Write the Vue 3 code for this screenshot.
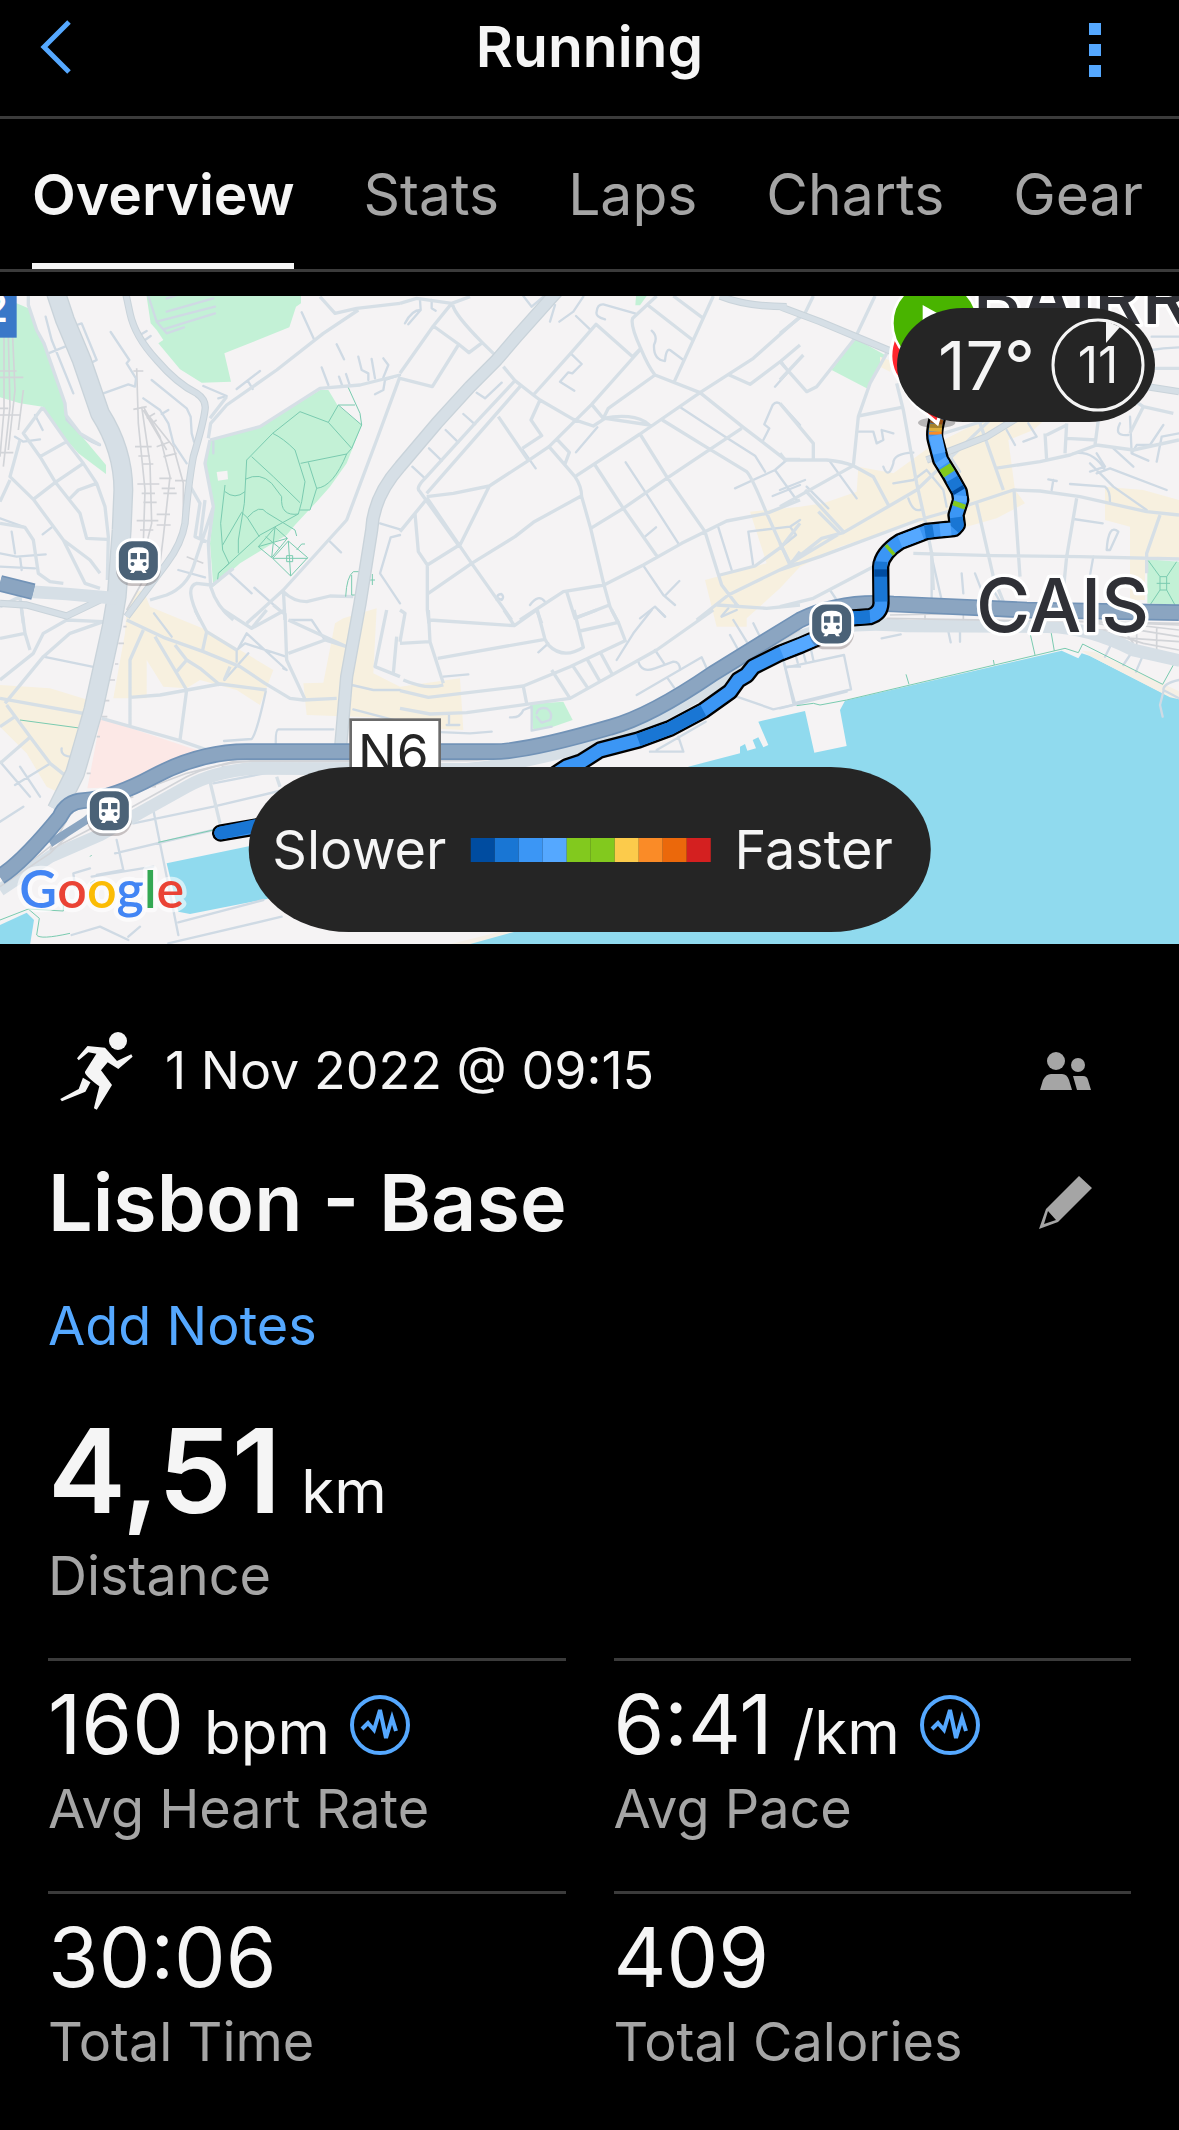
<template>
  <div class="activity-page">
    <header class="top-bar">
      <button class="icon-btn back-btn" type="button" aria-label="Back">
        <svg width="32" height="54" viewBox="0 0 32 54">
          <path d="M29 2 4 27l25 25" fill="none" stroke="currentColor" stroke-width="5" />
        </svg>
      </button>
      <h1 class="page-title">Running</h1>
      <button class="icon-btn menu-btn" type="button" aria-label="More options">
        <svg width="12" height="54" viewBox="0 0 12 54" fill="currentColor">
          <rect width="12" height="12" />
          <rect y="21" width="12" height="12" />
          <rect y="42" width="12" height="12" />
        </svg>
      </button>
    </header>

    <nav class="tabs">
      <button
        v-for="tab in tabs"
        :key="tab"
        type="button"
        class="tab"
        :class="{ active: tab === activeTab }"
        @click="activeTab = tab"
      >
        {{ tab }}
      </button>
    </nav>

    <section class="map">
      <svg class="map-canvas" viewBox="0 18 3537 1944" role="img" aria-label="Route map">
        <path v-for="(area, i) in areas" :key="'area' + i" :class="area.kind" :d="area.d" />

        <template v-for="layer in layers" :key="layer">
          <g v-for="(tile, i) in tiles" :key="layer + i" :transform="`translate(${tile.x} ${tile.y})`">
            <path v-if="tile[layer]" :class="layer" :d="tile[layer]" />
          </g>
        </template>

        <path v-for="(road, i) in mainRoads" :key="'road' + i" :class="road.kind" :d="road.d" />

        <!-- road shields -->
        <rect class="shield-blue" x="-60" y="0" width="110" height="143" />
        <text class="shield-blue-text" x="24" y="96">2</text>
        <rect class="shield-white" x="1052" y="1289" width="267" height="180" />
        <text class="shield-white-text" x="1074" y="1444">N6</text>

        <!-- recorded route -->
        <path class="route-casing" :d="routeLine" />
        <path class="route-base" :d="routeLine" />
        <path v-for="(part, i) in routeParts" :key="'part' + i" class="route-part" :stroke="part.color" :d="part.d" />
        <path class="route-end" d="M662 1629 780 1604" />

        <!-- finish and start pins -->
        <ellipse class="pin-shadow" cx="2810" cy="398" rx="56" ry="16" />
        <path class="pin-finish" d="M2684 140Q2660 200 2684 250L2740 340 2812 400 2872 200z" />
        <circle class="pin-start" cx="2805" cy="100" r="128" />
        <path class="pin-play" d="M2768 45l90 50-90 50z" />

        <g v-for="(station, i) in stations" :key="'station' + i" :transform="`translate(${station.x} ${station.y})`">
          <rect class="station-shadow" x="-67" y="-58" width="134" height="134" rx="48" />
          <rect class="station-box" x="-63" y="-63" width="126" height="126" rx="44" />
          <path
            class="station-train"
            fill-rule="evenodd"
            d="M-31-23Q-31-40 0-40T31-23V16Q31 28 20 29L25 37H14L9 30H-9L-14 37H-25L-20 29Q-31 28-31 16ZM-23-23V-4H-4V-23ZM5-23V-4H24V-23ZM-18 4a6 6 0 1 0 1 0ZM18 4a6 6 0 1 0 1 0Z"
          />
        </g>

        <text class="place" x="2918" y="103">BAIRR</text>
        <text class="place" x="2928" y="1025">CAIS</text>

        <text class="google" x="58" y="1855">
          <tspan class="g-blue">G</tspan><tspan class="g-red">o</tspan><tspan class="g-yellow">o</tspan><tspan class="g-blue">g</tspan><tspan class="g-green">l</tspan><tspan class="g-red">e</tspan>
        </text>
      </svg>

      <div class="weather">
        <span class="temperature">17°</span>
        <span class="wind">
          <svg class="wind-ring" viewBox="0 0 94 94">
            <circle cx="47" cy="47" r="45" />
            <path d="M55 3 69 9 55 25z" />
          </svg>
          <span class="wind-speed">11</span>
        </span>
      </div>

      <div class="legend">
        <span>Slower</span>
        <div class="legend-bar">
          <span v-for="(color, i) in paceColors" :key="i" :style="{ backgroundColor: color }"></span>
        </div>
        <span>Faster</span>
      </div>
    </section>

    <main class="details">
      <div class="date-row">
        <svg class="runner" width="73" height="78" viewBox="0 0 73 78" fill="currentColor">
          <ellipse cx="58" cy="9" rx="9" ry="9" />
          <path d="M27.5 14 45 15.700 57 29 71.300 22.300 72.600 24.700 58.300 37 47.700 30.300 41 38.300 52 53 36.800 77.700 33.900 76.300 39.300 54.300Q24 43 25 39.700L36.400 21.700 28.400 20.300 18.700 28.300 17 26.300z" />
          <path d="M22.900 45.700 30.500 50.300 25.400 59.700 1.900 69.300.2 67 18.700 57z" />
        </svg>
        <time class="date" datetime="2022-11-01T09:15">1 Nov 2022 @ 09:15</time>
        <button class="icon-btn" type="button" aria-label="Privacy">
          <svg width="52" height="38" viewBox="0 0 52 38" fill="currentColor">
            <circle cx="16" cy="9" r="9" />
            <circle cx="38" cy="13" r="7" />
            <path d="M0 38 3 28Q6 22 11 22H22Q27 22 29 28L32 38zM33 24H43Q47 24 48 28L51 38H37z" />
          </svg>
        </button>
      </div>

      <div class="title-row">
        <h2 class="activity-title">Lisbon - Base</h2>
        <button class="icon-btn" type="button" aria-label="Edit title">
          <svg width="53" height="53" viewBox="0 0 53 53" fill="currentColor" fill-rule="evenodd">
            <path d="M40 0 53 12 19 46 0 53 7 33zM9 35 5 48 17 44z" />
          </svg>
        </button>
      </div>

      <a href="#" class="notes-link">Add Notes</a>

      <dl class="stats">
        <div v-for="stat in stats" :key="stat.label" class="stat" :class="{ primary: stat.primary }">
          <dt class="stat-label">{{ stat.label }}</dt>
          <dd class="stat-value">
            <span>{{ stat.value }}</span>
            <span v-if="stat.unit" class="stat-unit">{{ stat.unit }}</span>
            <button v-if="stat.chart" class="icon-btn chart-btn" type="button" :aria-label="stat.label + ' chart'">
              <svg width="60" height="60" viewBox="0 0 60 60" fill="none" stroke="currentColor">
                <circle cx="30" cy="30" r="28" stroke-width="4" />
                <path d="M12 34 18 28 24 35 30 15 36 43 42 23 46 36" stroke-width="4" />
              </svg>
            </button>
          </dd>
        </div>
      </dl>
    </main>
  </div>
</template>

<script setup>
import { ref } from 'vue'

const tabs = ['Overview', 'Stats', 'Laps', 'Charts', 'Gear']
const activeTab = ref('Overview')

const stats = [
  { label: 'Distance', value: '4,51', unit: 'km', primary: true },
  { label: 'Avg Heart Rate', value: '160', unit: 'bpm', chart: true },
  { label: 'Avg Pace', value: '6:41', unit: '/km', chart: true },
  { label: 'Total Time', value: '30:06' },
  { label: 'Total Calories', value: '409' }
]

const paceColors = [
  '#004ca0', '#1976d4', '#3b96f5', '#55a8ff', '#82c91e',
  '#82c91e', '#fccb4b', '#fa8b27', '#eb680b', '#d42020'
]

const stations = [
  { x: 415, y: 812 },
  { x: 328, y: 1562 },
  { x: 2495, y: 1002 }
]

// Filled areas, in map coordinates
const areas = [
  { kind: 'park', d: 'M0 40H50L85 55 105 115 130 155 195 345 200 385 318 525V552L235 490 165 410 128 350 60 340 0 322z' },
  { kind: 'park', d: 'M437 0H903V40L888 50 868 112 673 190 693 275 605 278 540 238 475 160 490 150 470 120 452 100z' },
  { kind: 'park', d: 'M630 450 780 410 960 300H985L1012 345 1085 405 1040 520 990 590 950 635 885 705 860 735 720 820 640 890 630 760 642 650 615 520z' },
  { kind: 'land', d: 'M650 546 682 542 684 568 654 572z' },
  { kind: 'park', d: 'M1908 18H1940L1920 46H1906z' },
  { kind: 'park', d: 'M2565 145 2655 195 2600 295 2495 240z' },
  { kind: 'park', d: 'M1590 1242 1690 1235 1718 1290 1655 1312 1600 1320z' },
  { kind: 'park', d: 'M3442 808 3537 815V945L3442 940z' },
  { kind: 'sand', d: 'M380 960 410 905 430 900 450 950 620 1020 820 1140 780 1245 710 1200 600 1170 560 1195 490 1190 440 1110V1225H340L375 1030z' },
  { kind: 'sand', d: 'M0 1185 150 1195 265 1230 225 1400 200 1480 180 1510 140 1490 80 1390 0 1310z' },
  { kind: 'sand', d: 'M1030 985 1130 955 1120 1150 1200 1190 1380 1165 1390 1320 1200 1310V1285L920 1275 910 1180 970 1178 1005 1000z' },
  { kind: 'sand', d: 'M2250 665 2400 650 2470 640 2570 605 2575 530 2680 550 2790 470 2930 400 3060 370 3140 385 3100 420 3025 450 3045 600 3075 640 2990 685 2900 710 2820 690 2740 700 2520 770 2400 830 2340 895 2240 985V1010H2150L2115 870 2300 820z' },
  { kind: 'sand', d: 'M3315 590 3430 600 3537 630V810L3435 805V930H3390V710L3315 690z' },
  { kind: 'sand', d: 'M2640 200 2680 215 2670 245 2640 230z' },
  { kind: 'hospital', d: 'M302 1285 615 1388 600 1400 480 1435 345 1492 262 1495z' },
  { kind: 'water', d: 'M500 1720 860 1645V1815L570 1872 535 1865z' },
  { kind: 'water', d: 'M0 1905 80 1868 102 1890 90 1965H0z' },
  { kind: 'shore', d: 'M1340 1965 1500 1925H1560L1420 1965z' },
  { kind: 'water', d: 'M1400 1965 1545 1925 1900 1700 2065 1430 2220 1390V1370L2235 1362 2242 1382 2268 1375 2258 1350 2275 1342 2290 1372 2305 1365 2275 1295 2415 1263 2443 1388 2540 1368 2520 1260 2535 1232 3185 1082 3235 1105 3245 1090 3270 1098 3510 1220 3540 1225V1965z' },
  { kind: 'shore', d: 'M3245 1082 3285 1086 3540 1205V1228L3510 1222 3270 1098z' }
]

// Drawing order of the line layers
const layers = ['rail', 'lane', 'street', 'trail']

// Minor lines, each tile with its own origin
const tiles = [
  {
    x: 0,
    y: 0,
    rail: 'M12 140V360L0 500M25 140 30 350 10 530M38 140 45 300 25 480M70 300 55 420M0 243H50M0 262H70M0 375H60M0 355H25M0 488H40M410 235 415 400 435 600 430 760M425 350 450 520 455 700 440 760M430 350 480 440 510 560 490 740 480 820M440 370 520 470 550 580V700M430 360 500 480M400 243H430M400 358 440 350M405 470H455M415 498H450M425 522H460M412 582H478M425 610H465M430 637H470M410 692H475M420 720H460M440 385 465 370M455 400 470 390M470 470 510 455M490 500 530 490M478 565H515M485 595H525M490 610H530M525 572H560M470 673H510M470 705H512M430 870 380 960M450 870 400 950M560 800 610 820',
    lane: 'M137 80 155 150 220 310M145 190 195 170M230 105 245 100 290 210 280 215M332 126 388 210 380 220 408 265 405 290 385 283 310 310M197 355 200 390 250 440Q280 460 300 465M455 270 560 355 572 380 575 430 582 455M430 325 480 360 505 400 520 460 560 520M485 372 505 360M420 135 440 123M435 150 452 138M710 297 780 243M743 272 758 297M610 288 680 318 655 325M905 67 943 150M965 232 985 285M1010 163 1032 208M1017 260 1026 285M1038 252 1048 282M1075 200 1085 240 1105 250V270M1115 207 1125 265M1150 205 1165 225 1150 262M1125 313 1150 300 1155 270 1200 255M0 685 75 712M35 725 45 790M0 790 50 800 137 793M0 830 105 835M60 800 65 840M128 733 155 712M640 455V490M535 840 615 862M690 850 755 910M763 893 850 970M985 750 1023 787M1140 700 1200 718M1200 735 1172 742 1140 850 1200 940M105 375 128 420M45 440 70 455 120 448M445 18 470 95 500 130 552 112M500 25 540 12M500 65 640 25M470 95 645 50M490 118 645 70',
    street: 'M85 0V45L110 120 132 160 195 340 198 375 240 430 300 465M128 352 70 430 120 500 165 575 240 670 260 745 320 748M128 352 200 455 250 520 290 580 315 650 325 740 322 870M120 500 200 455M100 628 165 578 250 520M207 628 235 600 290 580M60 450 30 560 100 628 190 750 255 880 300 895M190 750 270 810 300 850M30 570 0 635M0 700 75 712 100 750 115 850 150 875 190 880M960 20 1005 70 1070 55 1200 40M1075 60 970 130 830 240 680 345 632 400 625 445M680 320 630 385M630 450 780 410 960 295 1080 285 1200 255M630 450 615 520 640 650 625 760 632 890Q650 950 700 990M632 890 700 835M1200 260 1130 450 1040 690 850 900 740 1000M600 990Q550 890 590 880L632 885M850 905Q880 935 920 935L990 918 1060 920M850 900 855 990M850 970 820 945M560 570 600 640 585 740 620 755M615 630 600 750M0 950 80 910 60 920 70 1000M450 930 500 915Q560 890 580 830L640 650',
    trail: 'M675 585 662 700 668 780 687 820 655 850 653 868M655 850 780 735 895 672 905 635 915 575 885 480Q850 445 818 430L900 365 985 397 1055 475M818 430 740 510 733 640 715 750V790M755 500 820 560 900 638M735 568Q780 545 815 580L845 620Q840 680 895 672M675 605Q705 630 735 605M725 667 742 683 778 740M742 683Q780 640 800 668L885 720 890 738M668 765 725 667M902 520 1040 492 1055 475 1085 405 1080 370 1045 293M985 397 1015 345H1065M1015 345 1085 405M925 517 950 595 930 660H900M950 595Q1000 590 1040 492M825 712 862 745 815 803 775 770 825 712 815 803M862 745 775 770M797 740 840 775M865 753 923 803 872 858 818 805 865 753 872 858M818 805H923M860 797H878V815H860zM890 780 905 762H915M1037 920Q1040 860 1060 845H1078M1055 855V915H1070M1100 870H1125M1117 852V885'
  },
  {
    x: 1200,
    y: 0,
    lane: 'M60 30 62 60Q35 60 15 100M62 60 25 103M95 30V55L107 62M370 18 395 50 430 20M465 45 450 95M478 95 520 65 550 20M528 78 570 118M615 88Q585 80 590 65 592 42 610 43L705 70M512 190 545 222 517 250 505 247 480 275 523 302M305 278 255 325 230 308M190 372 225 403M137 420 175 457M87 475 125 512M37 530 75 565M368 480 407 535M528 487 592 412M755 122Q775 140 762 165 760 210 795 213 798 175 810 180L850 210M843 353 980 443 1065 497 1095 545M677 517 735 605 835 760M735 740 768 712M955 712 995 840M1060 830 1045 725 1170 710 1200 690M1170 710 1188 735 1145 770M1143 213 1165 245 1125 290M1090 450 1108 415 1093 403 1118 345Q1130 330 1145 345L1200 405M1005 595 1125 540 1160 510M1125 540 1190 630M1118 618 1200 585M730 827 790 915 825 945M797 915 838 873M390 945Q415 910 435 935M720 985 765 950 795 980M965 978 985 955M290 930Q290 912 304 912 314 920 305 930L295 925',
    street: 'M0 40 50 25 155 40 210 20M155 40 100 108 0 250M100 108 175 162 207 188 247 158M175 165 97 290 0 265M158 45Q165 75 247 158L290 200M310 230 345 272 400 315 420 330 520 388 580 408 615 385 750 405 750 402M345 272 225 400 75 565Q45 595 60 605L175 765M360 290 80 610M80 620 160 610 268 588 385 512 447 470 575 343 720 180M268 588 180 765M295 380 385 512M367 475 425 437 393 390 420 330M447 470 525 560Q545 590 545 620L572 715 612 885 630 950 655 1000M470 447 508 487 495 522M400 315 512 190 588 103 698 200 722 175Q690 105 698 85L770 18M722 175Q745 230 765 255L900 308 1030 412 1155 508H1200M765 255 625 355 610 385Q690 370 735 395L748 405M575 343 610 385M743 45 878 150M820 18 910 85M940 18 823 275M525 560 720 432 900 308 1060 205 1200 80M983 253 1050 283 1143 213 1200 165M720 432 800 560 915 725 965 885 1015 950M787 390 930 478 1040 545Q1055 560 1100 670L1170 825M585 525 670 655 772 800M572 715 670 655 800 565 930 478 1025 415M45 670 55 785 82 825V960L87 1000M45 670 0 725M82 625 45 670M82 625 215 820 335 990M82 825 178 765M85 910 215 820 345 740 400 697 545 617M360 990 490 905 612 885 730 825 845 760 980 693 1100 670 1200 630M500 905 525 985 628 945M410 960 425 1000M960 855 1065 828 1145 770 1200 700M890 990 985 915 1060 878 1170 825 1200 785M1170 825 1200 820M950 945 1100 955 1200 945'
  },
  {
    x: 2340,
    y: 0,
    lane: 'M230 425H280L290 460 310 450 305 420 340 430M310 530Q325 570 340 520 340 490 400 488M340 580 400 570 440 540M385 625Q400 670 425 658M440 540 490 600 500 650M505 490 540 545M0 600 75 570M80 590 145 655M150 515 230 625M870 582 975 590Q990 600 990 635M820 570 815 600M805 568 830 573M880 687 968 700M980 780Q985 700 1015 725L990 780zM930 520 1000 590 1100 660M950 550 990 535 1160 600M930 545 975 530 950 490M1000 475 1060 530M880 490Q940 480 975 540M1020 400Q1000 440 1045 435M1050 380 1055 490 1105 512M1130 515 1145 440 1197 430M1055 490 1070 465 1110 465 1150 405M1115 140H1197M1115 180 1150 175 1197 172M680 420 705 465M730 455 770 440 745 400M455 800 455 930M455 800 485 930M545 850 550 910M585 850 620 940M660 935 640 900M150 900 170 930M940 800 915 940',
    street: 'M0 130 75 70 100 18M0 215 80 305 110 290 225 145 285 18M0 270 70 195M0 340 100 460V510M0 490 15 510H140Q190 515 220 527L280 560 325 645M220 527 235 380 270 280 320 190M235 378 365 352M0 760 30 820 180 730 115 665M75 600 190 725M0 650 220 527M0 840 120 800 415 690 520 660 700 600 780 603 900 620 1100 665 1197 675M30 820 125 745 190 728 410 600 640 380M350 280 370 360 410 580 435 690 455 790 460 900M400 790 640 797 900 800 1197 807M590 640 640 860 670 935M702 600 720 860M600 400 670 600M645 535 780 515 870 495 950 465 1060 480 1197 450M890 625 860 800 850 900M1140 675 1100 790V850M490 430 620 390M0 950 100 925 280 830M795 430 800 510M800 435 860 405M860 400 855 490M955 390 945 465M860 445 950 450M1060 330 1090 350 1050 430M1090 350 1180 370M1125 235H1197M1090 240 1125 235',
    trail: 'M1105 812 1140 860V900L1110 945M1190 815 1160 860V900L1185 945M1140 860H1160M1140 900H1160M1130 880H1170'
  },
  {
    x: 0,
    y: 960,
    rail: 'M370 50H380M355 100H372M345 162H355M330 210H345M315 272H328M305 320H322M290 380H300M260 490H272M385 555 480 520 560 490 700 455H1050M455 530H468M780 455H800M890 455H910M0 830 150 710 280 600 400 560M150 720 240 560M665 470H685',
    lane: 'M130 140 287 172M462 10 515 80M715 115 740 70 860 180 850 175M710 155V120L735 100 858 140M745 130 673 210M870 30H935L975 90M672 393 755 387Q770 370 797 245M828 415Q825 360 835 358H1000M1060 298 1200 335M1055 225 1120 240H1200M185 415Q180 440 220 440M45 525 148 462M0 455 90 560M300 640 480 580M60 470 120 560M0 635 70 590M350 690 370 780 290 795M225 830 220 790 270 775M535 937 790 870M505 1000 845 920M385 980 420 950M215 975 300 950 385 990M400 640 640 590 850 540M460 600 535 975M345 730 640 660M640 520 845 480M275 800 460 770',
    street: 'M585 0 620 65 607 125M670 0 755 55 855 0M800 0 755 55M620 65 710 120M380 30 490 82 610 125 720 170 795 220 870 265 910 270 1010 265M430 60 390 150V345M465 80 560 240 540 390M390 262 480 255 660 222 800 240M530 185 560 150 600 175 660 225M525 105 560 150M673 210 690 170M855 10 860 150 915 268M865 130 975 90 1040 110M865 30 1040 110M0 210 100 130 130 70 200 30 310 35M0 85 75 70 65 0M75 70 90 120M15 280 130 140 210 70 310 35M0 265 260 312M20 285 90 380 150 460 200 500M0 460 90 382M305 325 540 392 650 430M0 350 45 320M630 515 660 640M830 500 840 530M1160 0 1125 170 1200 200M1190 80 1180 190',
    trail: 'M60 330 245 355M475 697 640 660M0 930 85 897 118 925 110 975Q120 990 210 970M85 897 190 903V870M270 740 275 735M270 820 285 810'
  },
  {
    x: 1200,
    y: 960,
    lane: 'M415 127 445 100M130 200 205 193M85 365 210 370 275 365M140 345H178M147 310V340M330 322Q360 325 370 300L395 290M395 290V362L455 350M410 310Q415 290 440 295 460 310 450 330L425 338 410 320M715 155Q725 190 765 175L820 155Q840 155 840 180M710 255 905 142 920 175M765 120 792 160M803 205 822 232M990 75 1015 120M1060 40 1080 80M1000 30 1040 95M650 150 700 70 755 0M775 0 795 20M750 425H850L835 380M770 420 917 335M540 410 545 430M1155 170H1200M1150 150 1185 280M1010 260 1120 298 1200 280M965 20 1010 0',
    street: 'M0 0 15 10 0 95M0 100 90 95 85 0M90 95 130 220M90 30 343 47 410 0M312 0 343 47M113 145 435 88 412 0M435 88 445 105Q490 150 550 112L522 0M530 22 590 0M540 63 655 37 635 0M655 37 675 90M0 242 85 262 370 228 510 170 680 90M10 210Q80 240 130 225M0 295 90 312 200 308 510 265 770 120 940 0M370 230 380 280M455 180 510 265M520 170 562 232M560 145 600 215M600 125 635 190'
  },
  {
    x: 2340,
    y: 960,
    rail: 'M330 15 560 10 800 30 1197 45M435 15V40M550 15V40M900 60H1000M950 40 1197 80M960 60 1090 100 1197 120M980 80 1197 95M1020 45 1060 100M1070 50V110M1130 50V140M940 30 1197 60',
    lane: 'M20 172 192 135 213 238 40 280M10 150 40 280M0 295 200 245M47 135 53 158M68 120 77 155M92 115 100 150M305 85 362 73M503 55 512 97M540 60V95M990 110 975 140M1050 135 1030 165M1085 145 1068 185M1197 210Q1150 220 1150 240L1197 265M1150 245 1140 285 1148 320',
    trail: 'M50 287 100 280 120 285 200 270 855 115 895 128 908 102 1148 223 1180 165M378 193 387 223M640 150 643 165M748 60 765 135M813 65 823 123'
  }
]

// Avenues and the motorway, in map coordinates
const avenueNorth = 'M165 0 195 90 245 210 300 370Q370 480 370 600L365 720 350 920 335 1010 280 1260 225 1450 170 1560'
const avenueEast = 'M1675 0 1550 140 1490 210 1410 290 1310 400 1200 530Q1120 620 1115 720L1080 940 1040 1160 1022 1370'
const riverRoad = 'M0 1800 150 1700 300 1635 560 1490Q640 1445 760 1435L1400 1438Q1600 1420 1840 1340 2000 1280 2200 1150L2400 1040Q2540 990 2720 1008L3140 1010Q3260 1010 3400 1080L3540 1112'
const motorway = 'M0 1760Q70 1715 180 1580 200 1535 250 1532 340 1525 460 1460 600 1385 740 1385H1480Q1580 1385 1830 1312 1950 1280 2140 1150L2400 990Q2520 930 2680 942L3080 960 3537 968'
const sideRoads = 'M375 0 390 70Q405 140 470 210 530 280 590 310 620 330 615 360 610 400 580 500 565 580 555 700 545 760 500 820L380 980M2340 50 2460 95 2700 195 2800 240M3440 290 3537 305M2780 510 2960 440 3050 385M0 940 80 945 200 978 300 930M2160 18Q2240 50 2360 50'

const mainRoads = [
  { kind: 'minor-edge', d: sideRoads },
  { kind: 'minor-fill', d: sideRoads },
  { kind: 'avenue-edge', d: avenueEast },
  { kind: 'avenue-fill', d: avenueEast },
  { kind: 'boulevard-edge', d: avenueNorth },
  { kind: 'boulevard-fill', d: avenueNorth },
  { kind: 'river-fill', d: 'M90 905 200 912 350 925' },
  { kind: 'river-fill', d: riverRoad },
  { kind: 'rail', d: 'M0 1790 150 1690 240 1600M150 1680 380 1560 560 1460Q640 1420 760 1412H1400Q1520 1410 1840 1325 2000 1270 2180 1150L2400 1020M2660 985 3540 1000' },
  { kind: 'motorway-edge', d: 'M0 880 100 905' },
  { kind: 'motorway-fill', d: 'M0 880 100 905' },
  { kind: 'ramp', d: 'M150 1660 260 1590 340 1520' },
  { kind: 'motorway-edge', d: motorway },
  { kind: 'motorway-fill', d: motorway }
]

const routeLine =
  'M2812 385Q2800 430 2806 450L2822 510 2850 555 2878 605 2882 630 2868 675 2872 705 2862 716 2780 724 2700 755Q2645 790 2642 830L2643 940Q2642 970 2610 980L2540 985 2450 1045 2400 1067 2340 1090 2260 1130 2240 1155 2215 1170 2190 1205 2110 1262 2010 1315 1915 1350 1800 1380 1745 1415 1700 1430 1640 1470 1300 1520 662 1629'

const routeParts = [
  { color: '#c8681c', d: 'M2812 385 2808 402' },
  { color: '#dcae3c', d: 'M2808 402 2806 425' },
  { color: '#fa8b27', d: 'M2806 425 2806 434' },
  { color: '#55a8ff', d: 'M2806 436 2818 490M2822 510 2832 525' },
  { color: '#82c91e', d: 'M2834 530 2848 552' },
  { color: '#1976d4', d: 'M2856 567 2872 595' },
  { color: '#004ca0', d: 'M2872 595 2878 605' },
  { color: '#55a8ff', d: 'M2882 617 2880 636' },
  { color: '#82c91e', d: 'M2880 638 2875 652' },
  { color: '#1976d4', d: 'M2869 682 2872 705 2862 716M2800 722 2775 726' },
  { color: '#55a8ff', d: 'M2853 717 2820 720M2765 730 2700 755' },
  { color: '#82c91e', d: 'M2674 776 2666 783' },
  { color: '#1976d4', d: 'M2643 815 2642 830 2643 935M2610 980 2540 985' },
  { color: '#004ca0', d: 'M2642 838V860' },
  { color: '#55a8ff', d: 'M2450 1045 2345 1088' },
  { color: '#1976d4', d: 'M2110 1262 2010 1315 1915 1350' }
]
</script>

<style>
body {
  background: #000000;
}
</style>

<style scoped>
.activity-page {
  min-height: 100vh;
  background: #000000;
  color: #f5f5f5;
  font-family: Inter, 'Liberation Sans', sans-serif;
}

button {
  padding: 0;
  border: none;
  background: transparent;
  color: inherit;
  font: inherit;
  cursor: pointer;
}

svg {
  display: block;
}

.top-bar {
  display: grid;
  grid-template-columns: 80px 1fr 80px;
  align-items: center;
  height: 94px;
  padding: 0 40px 22px;
  border-bottom: 3px solid #3b3b3b;
  color: #55a8ff;
}

.back-btn {
  justify-self: start;
}

.menu-btn {
  justify-self: end;
  padding: 6px 38px 0 0;
}

.page-title {
  margin: 0;
  color: #f5f5f5;
  font-size: 57px;
  font-weight: 600;
  line-height: 72px;
  text-align: center;
}

.tabs {
  display: flex;
  justify-content: space-between;
  height: 150px;
  padding: 0 36px 0 32px;
  border-bottom: 3px solid #3b3b3b;
  color: #a5a5a5;
  font-size: 57px;
}

.tab {
  padding-top: 6px;
  border-bottom: 6px solid transparent;
}

.tab.active {
  border-bottom-color: #f5f5f5;
  color: #f5f5f5;
  font-weight: 600;
}

/* Map */
.map {
  position: relative;
  margin-top: 24px;
  overflow: hidden;
  background: #f5f3f4;
}

.map-canvas {
  width: 100%;
  height: auto;
}

.land {
  fill: #f5f3f4;
}

.park {
  fill: #c3f1d6;
}

.sand {
  fill: #f7f0df;
}

.shore {
  fill: #f5efe5;
}

.hospital {
  fill: #fce8e6;
}

.water {
  fill: #90daee;
}

.rail,
.lane,
.street,
.trail,
.ramp,
.minor-edge,
.minor-fill,
.avenue-edge,
.avenue-fill,
.boulevard-edge,
.boulevard-fill,
.river-fill,
.motorway-edge,
.motorway-fill {
  fill: none;
  stroke-linejoin: round;
}

.rail {
  stroke: #d2d4d8;
  stroke-width: 5;
}

.lane {
  stroke: #cfdae4;
  stroke-width: 7;
  stroke-linecap: round;
}

.street {
  stroke: #d6dfe6;
  stroke-width: 10;
}

.trail {
  stroke: #7acbb0;
  stroke-width: 3;
}

.minor-edge {
  stroke: #c9d3da;
  stroke-width: 22;
}

.minor-fill {
  stroke: #d6dfe6;
  stroke-width: 16;
}

.avenue-edge {
  stroke: #c9d3da;
  stroke-width: 40;
}

.avenue-fill {
  stroke: #d6dfe6;
  stroke-width: 32;
}

.boulevard-edge {
  stroke: #c9d3da;
  stroke-width: 60;
}

.boulevard-fill {
  stroke: #d6dfe6;
  stroke-width: 52;
}

.river-fill {
  stroke: #d6dfe6;
  stroke-width: 38;
}

.ramp {
  stroke: #8ba5c1;
  stroke-width: 24;
}

.motorway-edge {
  stroke: #7293b7;
  stroke-width: 50;
}

.motorway-fill {
  stroke: #8ba5c1;
  stroke-width: 40;
}

.shield-blue {
  fill: #3a78c8;
}

.shield-blue-text {
  fill: #ffffff;
  font-size: 120px;
  font-weight: 600;
  text-anchor: end;
}

.shield-white {
  fill: #ffffff;
  stroke: #6b6b6b;
  stroke-width: 8;
}

.shield-white-text {
  fill: #252525;
  font-size: 154px;
}

.route-casing,
.route-base,
.route-part,
.route-end {
  fill: none;
  stroke-linejoin: round;
}

.route-casing {
  stroke: #000000;
  stroke-width: 52;
  stroke-linecap: round;
}

.route-base {
  stroke: #3b96f5;
  stroke-width: 38;
  stroke-linecap: round;
}

.route-part {
  stroke-width: 38;
}

.route-end {
  stroke: #1976d4;
  stroke-width: 38;
  stroke-linecap: round;
}

.pin-shadow {
  fill: rgba(0, 0, 0, 0.25);
}

.pin-finish {
  fill: #ff262d;
  stroke: #ffffff;
  stroke-width: 10;
}

.pin-start {
  fill: #49b400;
  stroke: #ffffff;
  stroke-width: 8;
}

.pin-play {
  fill: #ffffff;
}

.station-shadow {
  fill: rgba(60, 40, 40, 0.25);
}

.station-box {
  fill: #4b6277;
  stroke: #ffffff;
  stroke-width: 9;
}

.station-train {
  fill: #ffffff;
}

.place {
  fill: #2f3036;
  stroke: #ffffff;
  stroke-width: 20;
  stroke-linejoin: round;
  paint-order: stroke;
  font-size: 222px;
  font-weight: 500;
}

.google {
  stroke: rgba(255, 255, 255, 0.6);
  stroke-width: 26;
  stroke-linejoin: round;
  paint-order: stroke;
  font-family: Lato, Inter, sans-serif;
  font-size: 156px;
  font-weight: 600;
}

.g-blue {
  fill: #4285f4;
}

.g-red {
  fill: #ea4335;
}

.g-yellow {
  fill: #fbbc05;
}

.g-green {
  fill: #34a853;
}

.weather,
.legend {
  position: absolute;
  display: flex;
  align-items: center;
  background: #252525;
}

.weather {
  top: 12px;
  right: 24px;
  gap: 16px;
  padding: 10px 10px 10px 41px;
  border-radius: 66px / 57px;
}

.temperature {
  font-size: 68px;
  line-height: 92px;
}

.wind {
  display: grid;
  place-items: center;
  width: 94px;
  height: 94px;
}

.wind-ring,
.wind-speed {
  grid-area: 1 / 1;
}

.wind-ring circle {
  fill: none;
  stroke: #f5f5f5;
  stroke-width: 3;
}

.wind-ring path {
  fill: #f5f5f5;
}

.wind-speed {
  font-size: 50px;
}

.legend {
  bottom: 12px;
  left: 50%;
  gap: 24px;
  padding: 0 38px 0 24px;
  border-radius: 100px / 82px;
  font-size: 54px;
  line-height: 165px;
  transform: translateX(-50%);
}

.legend-bar {
  display: flex;
}

.legend-bar span {
  width: 24px;
  height: 24px;
}

/* Details */
.details {
  display: flex;
  flex-direction: column;
  align-items: stretch;
  padding: 88px 48px 48px;
}

.date-row,
.title-row {
  display: flex;
  align-items: center;
  justify-content: space-between;
  padding-right: 39px;
  color: #a5a5a5;
}

.date-row {
  gap: 32px;
  margin-bottom: 44px;
  padding-left: 12px;
}

.runner,
.date,
.activity-title {
  color: #f5f5f5;
}

.date {
  flex: 1;
  font-size: 52px;
  line-height: 72px;
}

.activity-title {
  margin: 0;
  font-size: 79px;
  font-weight: 600;
  line-height: 96px;
}

.notes-link {
  align-self: flex-start;
  margin: 40px 0;
  color: #55a8ff;
  font-size: 54px;
  line-height: 72px;
  text-decoration: none;
}

.stats {
  display: grid;
  grid-template-columns: 1fr 1fr;
  column-gap: 48px;
  margin: 0;
}

.stat {
  display: flex;
  flex-direction: column-reverse;
  padding: 16px 0 46px;
  border-top: 3px solid #3b3b3b;
}

.stat.primary {
  grid-column: 1 / -1;
  padding-top: 0;
  border-top: none;
}

.stat-value {
  display: flex;
  align-items: baseline;
  gap: 20px;
  margin: 0;
  font-size: 82px;
  line-height: 96px;
}

.stat.primary .stat-value {
  font-size: 117px;
  font-weight: 600;
  line-height: 138px;
}

.stat-value .stat-unit {
  font-size: 60px;
  font-weight: 400;
  line-height: 60px;
}

.chart-btn {
  align-self: center;
  color: #55a8ff;
}

.stat-label {
  color: #a5a5a5;
  font-size: 54px;
  line-height: 72px;
}
</style>
